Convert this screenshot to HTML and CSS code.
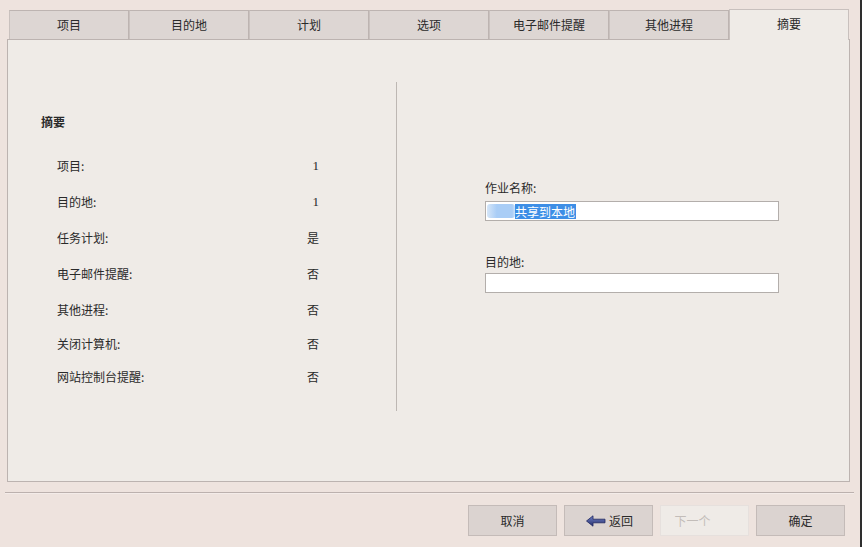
FILE: index.html
```html
<!DOCTYPE html>
<html lang="zh">
<head>
<meta charset="utf-8">
<title>摘要</title>
<link rel="stylesheet" href="styles.css">
</head>
<body>
<div class="window">
  <div class="tabs">
    <div class="tab">项目</div>
    <div class="tab">目的地</div>
    <div class="tab">计划</div>
    <div class="tab">选项</div>
    <div class="tab">电子邮件提醒</div>
    <div class="tab">其他进程</div>
    <div class="tab active">摘要</div>
  </div>
  <div class="panel">
    <div class="left">
      <div class="heading">摘要</div>
      <div class="rows">
        <div class="row"><span>项目:</span><span class="num">1</span></div>
        <div class="row"><span>目的地:</span><span class="num">1</span></div>
        <div class="row"><span>任务计划:</span><span>是</span></div>
        <div class="row"><span>电子邮件提醒:</span><span>否</span></div>
        <div class="row"><span>其他进程:</span><span>否</span></div>
        <div class="row r6"><span>关闭计算机:</span><span>否</span></div>
        <div class="row r7"><span>网站控制台提醒:</span><span>否</span></div>
      </div>
    </div>
    <div class="divider"></div>
    <div class="right">
      <div class="field-label">作业名称:</div>
      <div class="input"><span class="blur"></span><span class="sel">共享到本地</span></div>
      <div class="field-label second">目的地:</div>
      <div class="input"></div>
    </div>
  </div>
  <div class="separator"></div>
  <div class="buttons">
    <div class="btn">取消</div>
    <div class="btn back">
      <svg width="20" height="12" viewBox="0 0 20 12" aria-hidden="true">
        <defs>
          <linearGradient id="ag" x1="0" y1="0" x2="0" y2="1">
            <stop offset="0" stop-color="#6f7fc4"/>
            <stop offset="1" stop-color="#27306e"/>
          </linearGradient>
        </defs>
        <path d="M0.5 6 L7 0.8 L7 4.2 L19 4.2 L19 7.8 L7 7.8 L7 11.2 Z" fill="url(#ag)" stroke="#1f2760" stroke-width="0.8" stroke-linejoin="round"/>
      </svg>
      <span>返回</span>
    </div>
    <div class="btn disabled">下一个</div>
    <div class="btn">确定</div>
  </div>
</div>
</body>
</html>
```

FILE: styles.css
```css
html, body {
  margin: 0;
  padding: 0;
}
body {
  width: 862px;
  height: 547px;
  background: #eee3de;
  font-family: "Noto Sans CJK SC", "Noto Sans", sans-serif;
  font-size: 12px;
  color: #2a2a2a;
  overflow: hidden;
}
.window {
  box-sizing: border-box;
  width: 862px;
  height: 547px;
  border-right: 2px solid #2e2e2e;
  padding-top: 9px;
}
.tabs {
  display: flex;
  align-items: flex-end;
  padding-left: 9px;
  height: 31px;
  position: relative;
  z-index: 1;
}
.tab {
  box-sizing: border-box;
  width: 120px;
  height: 29px;
  margin-bottom: 1px;
  background: #ddd6d3;
  border: 1px solid #bdb4b1;
  border-left: 1px solid #c9c1be;
  border-bottom: none;
  display: flex;
  align-items: center;
  justify-content: center;
  line-height: 16px;
  padding-bottom: 1px;
}
.tab.active {
  height: 31px;
  margin-bottom: 0;
  background: #efebe7;
  border-color: #c8c0bd;
  padding-bottom: 2px;
}
.panel {
  box-sizing: border-box;
  margin-left: 7px;
  margin-top: -1px;
  width: 843px;
  height: 443px;
  background: #efebe7;
  border: 1px solid #bcb3b0;
  display: flex;
}
.left {
  width: 388px;
  padding-top: 74px;
}
.heading {
  font-weight: bold;
  padding-left: 33px;
  line-height: 16px;
}
.rows {
  margin-top: 28px;
  padding-left: 49px;
  width: 262px;
  display: flex;
  flex-direction: column;
  gap: 20px;
}
.row {
  display: flex;
  justify-content: space-between;
  line-height: 16px;
}
.num {
  font-family: "Liberation Serif", serif;
  font-size: 13px;
}
.row.r6 {
  margin-top: -2px;
}
.row.r7 {
  margin-top: -3px;
}
.divider {
  width: 1px;
  margin-top: 42px;
  height: 329px;
  background: #bdb7b3;
}
.right {
  padding-left: 88px;
  padding-top: 140px;
}
.field-label {
  line-height: 16px;
  margin-bottom: 5px;
}
.field-label.second {
  margin-top: 33px;
  margin-bottom: 3px;
}
.input {
  box-sizing: border-box;
  width: 294px;
  height: 20px;
  background: #ffffff;
  border: 1px solid #b3aeab;
  display: flex;
  align-items: center;
  padding-left: 1px;
}
.blur {
  display: inline-block;
  width: 28px;
  height: 14px;
  background: linear-gradient(90deg, #d6e6f8 0%, #a9cdf6 35%, #a9cdf6 90%, #cfe2f8 100%);
  border-radius: 3px;
}
.sel {
  background: #3d8ee6;
  color: #ffffff;
  line-height: 15px;
  padding-right: 1px;
}
.separator {
  margin-top: 10px;
  margin-left: 5px;
  width: 849px;
  height: 2px;
  background: linear-gradient(#bcb1ae 0 1px, #f4ece9 1px 2px);
}
.buttons {
  display: flex;
  justify-content: flex-end;
  gap: 7px;
  padding-right: 15px;
  margin-top: 11px;
}
.btn {
  box-sizing: border-box;
  width: 89px;
  height: 31px;
  background: #dbd3d0;
  border: 1px solid #c4bbb8;
  display: flex;
  align-items: center;
  justify-content: center;
  line-height: 16px;
}
.btn.back {
  gap: 3px;
  padding-left: 2px;
}
.btn.back svg {
  display: block;
}
.btn.disabled {
  background: #efebe7;
  border-color: #e6e0dd;
  color: #c3bdb9;
  padding-right: 24px;
}
```
